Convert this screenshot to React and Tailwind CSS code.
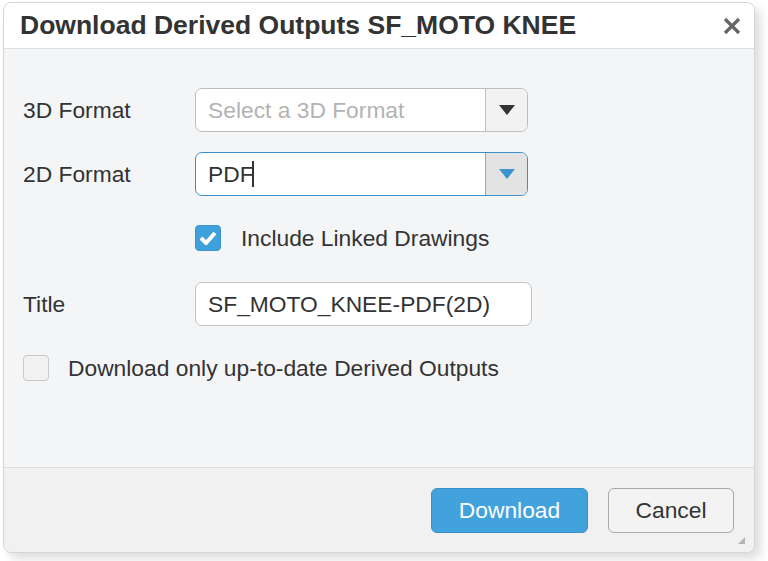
import React from "react";

function Caret({ color }) {
  return (
    <svg width="16" height="10" viewBox="0 0 16 10">
      <path d="M0 0 L16 0 L8 10 Z" fill={color} />
    </svg>
  );
}

export default function App() {
  return (
    <div
      className="w-[768px] h-[561px] bg-white overflow-hidden pl-[3px] pt-[2px]"
      style={{ fontFamily: '"Liberation Sans", Arial, sans-serif' }}
    >
      <div className="w-[752px] h-[551px] flex flex-col rounded-[8px] border border-[#d6d6d6] overflow-hidden shadow-[6px_6px_10px_rgba(0,0,0,0.13)] bg-[#f4f5f7]">
        {/* header */}
        <div className="h-[46px] shrink-0 bg-white border-b border-[#dedede] flex items-center justify-between pl-[16px] pr-[12px]">
          <div className="text-[26.5px] font-bold text-[#333] leading-none">
            Download Derived Outputs SF_MOTO KNEE
          </div>
          <svg width="18" height="18" viewBox="0 0 18 18" className="mr-[1px]">
            <path d="M2 2 L16 16 M16 2 L2 16" stroke="#666" strokeWidth="3.2" strokeLinecap="butt" />
          </svg>
        </div>

        {/* body */}
        <div className="flex-1 flex flex-col pl-[19px] pt-[39px] text-[22.8px] text-[#333]">
          <div className="flex items-center h-[44px]">
            <div className="w-[172px]">3D Format</div>
            <div className="w-[333px] h-[44px] flex rounded-[7px] border border-[#bdbdbd] bg-white overflow-hidden">
              <div className="flex-1 flex items-center pl-[12px] text-[#b3b3b3]">Select a 3D Format</div>
              <div className="w-[42px] border-l border-[#bdbdbd] bg-[#f2f2f2] flex items-center justify-center">
                <Caret color="#333" />
              </div>
            </div>
          </div>

          <div className="flex items-center h-[44px] mt-[20px]">
            <div className="w-[172px]">2D Format</div>
            <div className="w-[333px] h-[44px] flex rounded-[7px] border border-[#3d8fca] bg-white overflow-hidden">
              <div className="flex-1 flex items-center pl-[12px] text-[#333]">
                PDF<span className="inline-block w-[2px] h-[26px] bg-[#333] ml-[-2px]"></span>
              </div>
              <div className="w-[42px] border-l border-[#9ab] bg-[#e3e3e3] flex items-center justify-center">
                <Caret color="#3d95d0" />
              </div>
            </div>
          </div>

          <div className="flex items-center h-[26px] mt-[29px] pl-[172px]">
            <div className="w-[26px] h-[26px] rounded-[4px] bg-[#3fa1dc] border border-[#3a95cf] flex items-center justify-center">
              <svg width="18" height="14" viewBox="0 0 18 14">
                <path d="M2 7 L7 12 L16 2" stroke="white" strokeWidth="4" fill="none" strokeLinejoin="miter" />
              </svg>
            </div>
            <div className="ml-[20px]">Include Linked Drawings</div>
          </div>

          <div className="flex items-center h-[44px] mt-[31px]">
            <div className="w-[172px]">Title</div>
            <div className="w-[337px] h-[44px] flex items-center rounded-[7px] border border-[#c4c4c4] bg-white pl-[12px]">
              SF_MOTO_KNEE-PDF(2D)
            </div>
          </div>

          <div className="flex items-center h-[26px] mt-[29px]">
            <div className="w-[26px] h-[26px] rounded-[4px] bg-[#f2f2f2] border border-[#c8c8c8]"></div>
            <div className="ml-[19px]">Download only up-to-date Derived Outputs</div>
          </div>
        </div>

        {/* footer */}
        <div className="h-[85px] shrink-0 border-t border-[#dedede] bg-[#f1f1f1] relative flex items-start justify-end pt-[20px] pr-[20px] gap-[20px] text-[22.8px]">
          <button className="w-[157px] h-[45px] rounded-[6px] bg-[#42a2dc] border border-[#3a90c9] text-white">
            Download
          </button>
          <button className="w-[126px] h-[45px] rounded-[6px] bg-[#f3f3f3] border border-[#aaaaaa] text-[#333]">
            Cancel
          </button>
          <div className="absolute right-[9px] bottom-[8px] w-[7px] h-[7px] bg-[#b5b5b5]" style={{ clipPath: "polygon(100% 0, 100% 100%, 0 100%)" }}></div>
        </div>
      </div>
    </div>
  );
}
